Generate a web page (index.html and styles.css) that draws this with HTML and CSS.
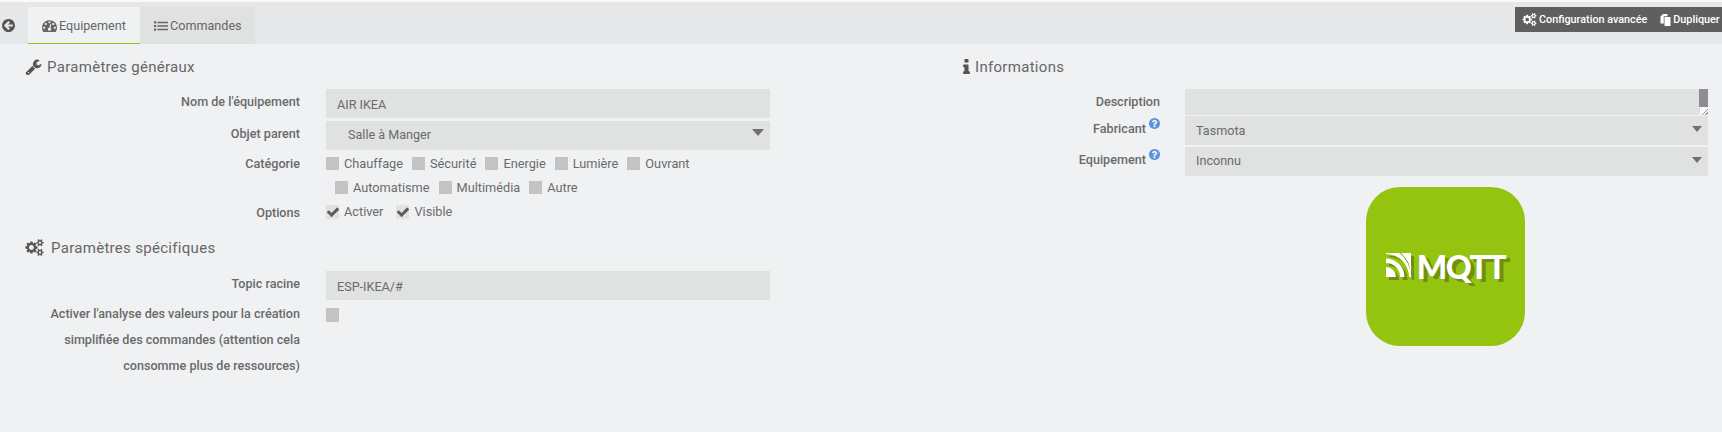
FILE: index.html
```html
<!DOCTYPE html>
<html lang="fr">
<head>
<meta charset="utf-8">
<title>Equipement</title>
<link rel="stylesheet" href="styles.css">
</head>
<body>
<svg class="defs" width="0" height="0" aria-hidden="true">
<symbol id="i-back" viewBox="128 128 1536 1536"><path d="M1408 960v-128q0-26-19-45t-45-19h-502l189-189q19-19 19-45t-19-45l-91-91q-18-18-45-18t-45 18l-362 362-91 91q-18 18-18 45t18 45l91 91 362 362q18 18 45 18t45-18l91-91q18-18 18-45t-18-45l-189-189h502q26 0 45-19t19-45zm256-64q0 209-103 385.5t-279.5 279.5-385.5 103-385.5-103-279.5-279.5-103-385.5 103-385.5 279.5-279.5 385.5-103 385.5 103 279.5 279.5 103 385.5z"/></symbol>
<symbol id="i-gauge" viewBox="0 0 1792 1792"><path d="M384 1152q0-53-37.5-90.5t-90.5-37.5-90.5 37.5-37.5 90.5 37.5 90.5 90.5 37.5 90.5-37.5 37.5-90.5zm192-448q0-53-37.5-90.5t-90.5-37.5-90.5 37.5-37.5 90.5 37.5 90.5 90.5 37.5 90.5-37.5 37.5-90.5zm428 481l101-382q6-26-7.5-48.5t-38.5-29.5-48 6.5-30 39.5l-101 382q-60 5-107 43.5t-63 98.5q-20 77 20 146t117 89 146-20 89-117q16-60-6-117t-72-91zm660-33q0-53-37.5-90.5t-90.5-37.5-90.5 37.5-37.5 90.5 37.5 90.5 90.5 37.5 90.5-37.5 37.5-90.5zm-640-640q0-53-37.5-90.5t-90.5-37.5-90.5 37.5-37.5 90.5 37.5 90.5 90.5 37.5 90.5-37.5 37.5-90.5zm448 192q0-53-37.5-90.5t-90.5-37.5-90.5 37.5-37.5 90.5 37.5 90.5 90.5 37.5 90.5-37.5 37.5-90.5zm320 448q0 261-141 483-19 29-54 29h-1402q-35 0-54-29-141-221-141-483 0-182 71-348t191-286 286-191 348-71 348 71 286 191 191 286 71 348z"/></symbol>
<symbol id="i-list" viewBox="0 0 1792 1792"><path d="M0 300h280v280h-280zM0 756h280v280h-280zM0 1212h280v280h-280zM440 340h1352v200h-1352zM440 796h1352v200h-1352zM440 1252h1352v200h-1352z"/></symbol>
<symbol id="i-wrench" viewBox="64 64 1664 1664"><path d="M448 1472q0-26-19-45t-45-19-45 19-19 45 19 45 45 19 45-19 19-45zm644-420l-682 682q-37 37-90 37-52 0-91-37l-106-108q-38-36-38-90 0-53 38-91l681-681q39 98 114.5 173.5t173.5 114.5zm634-435q0 39-23 106-47 134-164.5 217.5t-258.5 83.5q-185 0-316.5-131.5t-131.5-316.5 131.5-316.5 316.5-131.5q58 0 121.5 16.5t107.5 46.5q16 11 16 28t-16 28l-293 169v224l193 107q5-3 79-48.5t135.5-81 70.5-35.5q15 0 23.5 10t8.5 25z"/></symbol>
<symbol id="i-cogs" viewBox="0 0 1920 1792"><path d="M896 896q0-106-75-181t-181-75-181 75-75 181 75 181 181 75 181-75 75-181zm768 512q0-52-38-90t-90-38-90 38-38 90q0 53 37.5 90.5t90.5 37.5 90.5-37.5 37.5-90.5zm0-1024q0-52-38-90t-90-38-90 38-38 90q0 53 37.5 90.5t90.5 37.5 90.5-37.5 37.5-90.5zm-384 421v185q0 10-7 19.5t-16 10.5l-155 24q-11 35-32 76 34 48 90 115 7 11 7 20 0 12-7 19-23 30-82.5 89.5t-78.5 59.5q-11 0-21-7l-115-90q-37 19-77 31-11 108-23 155-7 24-30 24h-186q-11 0-20-7.5t-10-17.5l-23-153q-34-10-75-31l-118 89q-7 7-20 7-11 0-21-8-144-133-144-160 0-9 7-19 10-14 41-53t47-61q-23-44-35-82l-152-24q-10-1-17-9.5t-7-19.5v-185q0-10 7-19.5t16-10.5l155-24q11-35 32-76-34-48-90-115-7-11-7-20 0-12 7-20 22-30 82-89t79-59q11 0 21 7l115 90q34-18 77-32 11-108 23-154 7-24 30-24h186q11 0 20 7.5t10 17.5l23 153q34 10 75 31l118-89q8-7 20-7 11 0 21 8 144 133 144 160 0 8-7 19-12 16-42 54t-45 60q23 48 34 82l152 23q10 2 17 10.5t7 19.5zm640 533v140q0 16-149 31-12 27-30 52 51 113 51 138 0 4-4 7-122 71-124 71-8 0-46-47t-52-68q-20 2-30 2t-30-2q-14 21-52 68t-46 47q-2 0-124-71-4-3-4-7 0-25 51-138-18-25-30-52-149-15-149-31v-140q0-16 149-31 13-29 30-52-51-113-51-138 0-4 4-7 4-2 35-20t59-34 30-16q8 0 46 46.5t52 67.5q20-2 30-2t30 2q51-71 92-112l6-2q4 0 124 70 4 3 4 7 0 25-51 138 17 23 30 52 149 15 149 31zm0-1024v140q0 16-149 31-12 27-30 52 51 113 51 138 0 4-4 7-122 71-124 71-8 0-46-47t-52-68q-20 2-30 2t-30-2q-14 21-52 68t-46 47q-2 0-124-71-4-3-4-7 0-25 51-138-18-25-30-52-149-15-149-31v-140q0-16 149-31 13-29 30-52-51-113-51-138 0-4 4-7 4-2 35-20t59-34 30-16q8 0 46 46.5t52 67.5q20-2 30-2t30 2q51-71 92-112l6-2q4 0 124 70 4 3 4 7 0 25-51 138 17 23 30 52 149 15 149 31z"/></symbol>
<symbol id="i-info" viewBox="576 128 640 1408"><path d="M1216 1344v128q0 26-19 45t-45 19h-512q-26 0-45-19t-19-45v-128q0-26 19-45t45-19h64v-384h-64q-26 0-45-19t-19-45v-128q0-26 19-45t45-19h384q26 0 45 19t19 45v576h64q26 0 45 19t19 45zm-128-1152v192q0 26-19 45t-45 19h-256q-26 0-45-19t-19-45v-192q0-26 19-45t45-19h256q26 0 45 19t19 45z"/></symbol>
<symbol id="i-files" viewBox="0 0 20 24"><path d="M5 0h9v4.500h-7.500v14.500h-6.500v-14zM8 6h12v18h-12z"/></symbol>
<symbol id="i-help" viewBox="128 128 1536 1536"><path d="M1024 1376v-192q0-14-9-23t-23-9h-192q-14 0-23 9t-9 23v192q0 14 9 23t23 9h192q14 0 23-9t9-23zm256-672q0-88-55.5-163t-138.5-116-170-41q-243 0-371 213-15 24 8 42l132 100q7 6 19 6 16 0 25-12 53-68 86-92 34-24 86-24 48 0 85.5 26t37.5 59q0 38-20 61t-68 45q-63 28-115.5 86.5t-52.5 125.5v36q0 14 9 23t23 9h192q14 0 23-9t9-23q0-19 21.5-49.5t54.5-49.5q32-18 49-28.5t46-35 44.5-48 28-60.5 12.5-81zm384 192q0 209-103 385.5t-279.5 279.5-385.5 103-385.5-103-279.5-279.5-103-385.5 103-385.5 279.5-279.5 385.5-103 385.5 103 279.5 279.5 103 385.5z"/></symbol>
<symbol id="i-check" viewBox="0 0 1792 1792"><path d="M1671 566q0 40-28 68l-724 724-136 136q-28 28-68 28t-68-28l-136-136-362-362q-28-28-28-68t28-68l136-136q28-28 68-28t68 28l294 295 656-657q28-28 68-28t68 28l136 136q28 28 28 68z"/></symbol>
<symbol id="i-wifi" viewBox="0 0 29 24"><path d="M0 14a10 10 0 0 1 10 10h-10zM0 5.500a18.500 18.500 0 0 1 18.500 18.500h-4.500a14 14 0 0 0-14-14zM0 0h13a25 25 0 0 1 11 24h-1a23 23 0 0 0-23-23zM15 0h10v24h-1a27 27 0 0 0-9-24z"/></symbol>
</svg>

<header class="topbar">
  <nav class="tabs">
    <a class="back"><svg class="ico ico-back"><use href="#i-back"/></svg></a>
    <a class="tab tab-active"><svg class="ico ico-gauge"><use href="#i-gauge"/></svg>Equipement</a>
    <a class="tab"><svg class="ico ico-list"><use href="#i-list"/></svg>Commandes</a>
  </nav>
  <div class="actions">
    <a class="action"><svg class="ico ico-cog-sm"><use href="#i-cogs"/></svg>Configuration avancée</a>
    <a class="action action-last"><svg class="ico ico-files"><use href="#i-files"/></svg>Dupliquer</a>
  </div>
</header>

<main class="content">
  <section class="col col-left">
    <h3 class="title"><svg class="ico ico-wrench"><use href="#i-wrench"/></svg>Paramètres généraux</h3>
    <div class="row row-first">
      <label class="lbl">Nom de l'équipement</label>
      <div class="field input">AIR IKEA</div>
    </div>
    <div class="row row-select">
      <label class="lbl">Objet parent</label>
      <div class="field select select-indent">Salle à Manger<span class="caret"></span></div>
    </div>
    <div class="row row-cat">
      <label class="lbl">Catégorie</label>
      <div class="checks">
        <div class="check-line">
          <span class="cb"></span><span class="cbl">Chauffage</span>
          <span class="cb"></span><span class="cbl">Sécurité</span>
          <span class="cb"></span><span class="cbl">Energie</span>
          <span class="cb"></span><span class="cbl">Lumière</span>
          <span class="cb"></span><span class="cbl">Ouvrant</span>
        </div>
        <div class="check-line check-line-2">
          <span class="cb"></span><span class="cbl">Automatisme</span>
          <span class="cb"></span><span class="cbl">Multimédia</span>
          <span class="cb"></span><span class="cbl">Autre</span>
        </div>
      </div>
    </div>
    <div class="row row-opt">
      <label class="lbl">Options</label>
      <div class="check-line check-line-opt">
        <span class="cb cb-on"><svg class="ico ico-check"><use href="#i-check"/></svg></span><span class="cbl">Activer</span>
        <span class="cb cb-on"><svg class="ico ico-check"><use href="#i-check"/></svg></span><span class="cbl">Visible</span>
      </div>
    </div>
    <h3 class="title title-2"><svg class="ico ico-cogs"><use href="#i-cogs"/></svg>Paramètres spécifiques</h3>
    <div class="row row-topic">
      <label class="lbl">Topic racine</label>
      <div class="field input">ESP-IKEA/#</div>
    </div>
    <div class="row row-long">
      <label class="lbl lbl-long">Activer l'analyse des valeurs pour la création simplifiée des commandes (attention cela consomme plus de ressources)</label>
      <span class="cb cb-solo"></span>
    </div>
  </section>

  <section class="col col-right">
    <h3 class="title"><svg class="ico ico-info"><use href="#i-info"/></svg>Informations</h3>
    <div class="row row-first">
      <label class="lbl">Description</label>
      <div class="field textarea"><span class="scroll"></span><span class="grip"></span></div>
    </div>
    <div class="row row-r-sel">
      <label class="lbl">Fabricant <svg class="ico ico-help"><use href="#i-help"/></svg></label>
      <div class="field select">Tasmota<span class="caret caret-sm"></span></div>
    </div>
    <div class="row row-r-sel2">
      <label class="lbl">Equipement <svg class="ico ico-help"><use href="#i-help"/></svg></label>
      <div class="field select select-tight">Inconnu<span class="caret caret-sm"></span></div>
    </div>
    <div class="logo-wrap">
      <div class="logo">
        <span class="wifi-box">
          <svg class="wifi wifi-shadow"><use href="#i-wifi"/></svg>
          <svg class="wifi wifi-main"><use href="#i-wifi"/></svg>
        </span>
        <span class="mqtt">MQTT</span>
      </div>
    </div>
  </section>
</main>
</body>
</html>
```
FILE: styles.css
```css
* { box-sizing: border-box; }
html, body { height: 100%; }
body {
  margin: 0;
  overflow: hidden;
  background: #eff1f3;
  color: #666;
  font-family: Roboto, "Liberation Sans", sans-serif;
  font-size: 12.6px;
}
.defs { display: block; height: 0; }
.ico { display: inline-block; fill: currentColor; flex: none; }

.topbar {
  display: flex;
  justify-content: space-between;
  align-items: flex-start;
  height: 44px;
  padding-top: 5px;
  border-top: 2px solid #f9f9f9;
  background: #e6e7e8;
}
.tabs { display: flex; align-items: stretch; height: 37px; }
.back { width: 28px; display: flex; align-items: center; padding: 0 0 1px 2px; color: #555; }
.ico-back { width: 13px; height: 13px; }
.tab {
  display: flex;
  align-items: center;
  gap: 2px;
  width: 115px;
  padding-left: 14px;
  background: #e0e1e1;
  color: #666;
}
.tab-active {
  width: 112px;
  background: #eff1f3;
  border-bottom: 1px solid #93c50f;
}
.ico-gauge { width: 15px; height: 15px; }
.ico-list { width: 14px; height: 14px; }

.actions {
  display: flex;
  align-items: center;
  height: 25px;
  width: 207px;
  padding-left: 7px;
  background: #5f5f5f;
  color: #fff;
  font-size: 10.8px;
  font-weight: 500;
  white-space: nowrap;
}
.action { display: flex; align-items: center; gap: 2px; margin-right: 13px; }
.action-last { margin-right: 0; gap: 2px; }
.ico-cog-sm { width: 15px; height: 13px; }
.ico-files { width: 11px; height: 12px; }

.content { display: flex; }
.col-left { width: 961px; flex: none; }
.col-right { flex: 1; }

.title {
  display: flex;
  align-items: center;
  margin: 0;
  padding: 12px 0 0 25px;
  height: 33px;
  font-size: 15px;
  font-weight: 400;
  letter-spacing: 0.3px;
  color: #666;
}
.col-right .title { padding-left: 2px; }
.ico-wrench { width: 17px; height: 16px; margin-right: 5px; color: #555; }
.ico-cogs { width: 19px; height: 17px; margin-right: 7px; color: #555; }
.ico-info { width: 7px; height: 15px; margin-right: 5px; color: #555; }
.title-2 { padding-top: 0; height: 21px; margin-top: 12px; }

.row { display: flex; align-items: flex-start; }
.lbl {
  flex: none;
  width: 300px;
  margin-right: 26px;
  text-align: right;
  font-weight: 500;
  color: #6a6a6a;
  line-height: 25px;
}
.field {
  position: relative;
  width: 444px;
  background: #e0e1e1;
  color: #6b6b6b;
}
.input, .select { height: 29px; line-height: 29px; padding-left: 11px; }
.input { padding-top: 1px; }
.select-indent { padding-left: 22px; line-height: 27px; }
.select-tight { line-height: 27px; }
.row-first { margin-top: 12px; }
.row-select { margin-top: 3px; }
.row-cat { margin-top: 1px; }
.row-opt { margin-top: 1px; }

.caret {
  position: absolute;
  right: 6px;
  top: 8px;
  border-left: 6px solid transparent;
  border-right: 6px solid transparent;
  border-top: 7px solid #707070;
}
.caret-sm { top: 10px; border-left-width: 5.5px; border-right-width: 5.5px; border-top-width: 6px; }

.checks { display: flex; flex-direction: column; }
.check-line { display: flex; align-items: center; height: 24px; }
.check-line-2 { padding-left: 9px; }
.check-line-opt { height: 23px; }
.check-line-opt .cbl { margin-right: 13px; }
.cb {
  flex: none;
  display: flex;
  align-items: center;
  justify-content: center;
  width: 13px;
  height: 13px;
  margin-right: 5px;
  background: #c3c3c3;
}
.cbl { margin-right: 9px; color: #6b6b6b; font-size: 12.75px; }
.cb-on { height: 14px; background: #e0e1e1; }
.ico-check { width: 14px; height: 14px; color: #5c5c5c; }

.row-topic { margin-top: 13px; }
.row-long { margin-top: 1px; }
.lbl-long { line-height: 26px; }
.cb-solo { margin-top: 7px; height: 14px; }

.col-right .lbl { width: 199px; margin-right: 25px; }
.col-right .field { width: 523px; }
.textarea { height: 26px; }
.row-r-sel { margin-top: 1px; }
.row-r-sel2 { margin-top: 2px; }
.scroll { position: absolute; right: 0; top: 0; width: 9px; height: 18px; background: #8e8e92; }
.grip {
  position: absolute;
  right: 0;
  bottom: 0;
  width: 8px;
  height: 8px;
  background: linear-gradient(135deg, #f8f8f8 60%, #999 60%, #999 68%, #f8f8f8 68%, #f8f8f8 80%, #999 80%, #999 88%, #f8f8f8 88%);
}
.ico-help { width: 11px; height: 11px; color: #5b93e0; vertical-align: 4px; }

.logo-wrap { padding: 11px 0 0 405px; }
.logo {
  display: flex;
  align-items: center;
  justify-content: center;
  gap: 2px;
  width: 159px;
  height: 159px;
  padding-bottom: 3px;
  border-radius: 34px;
  background: #94c40f;
}
.wifi-box { position: relative; display: block; width: 29px; height: 24px; }
.wifi { display: block; width: 29px; height: 24px; overflow: visible; }
.wifi-shadow { position: absolute; left: 3px; top: 3px; fill: #6f8f12; }
.wifi-main { position: absolute; left: 0; top: 0; fill: #fff; }
.mqtt {
  padding-top: 4px;
  font-family: Lato, "Open Sans", sans-serif;
  font-weight: 900;
  font-size: 32px;
  line-height: 1;
  letter-spacing: -1.5px;
  color: #fff;
  text-shadow: 4px 3px 0 #6f8f12;
}
```
